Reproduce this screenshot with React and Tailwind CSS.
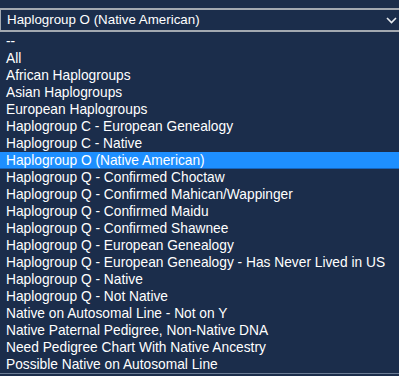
import React from 'react'

const OPTIONS = [
  '--',
  'All',
  'African Haplogroups',
  'Asian Haplogroups',
  'European Haplogroups',
  'Haplogroup C - European Genealogy',
  'Haplogroup C - Native',
  'Haplogroup O (Native American)',
  'Haplogroup Q - Confirmed Choctaw',
  'Haplogroup Q - Confirmed Mahican/Wappinger',
  'Haplogroup Q - Confirmed Maidu',
  'Haplogroup Q - Confirmed Shawnee',
  'Haplogroup Q - European Genealogy',
  'Haplogroup Q - European Genealogy - Has Never Lived in US',
  'Haplogroup Q - Native',
  'Haplogroup Q - Not Native',
  'Native on Autosomal Line - Not on Y',
  'Native Paternal Pedigree, Non-Native DNA',
  'Need Pedigree Chart With Native Ancestry',
  'Possible Native on Autosomal Line',
]

const SELECTED = 'Haplogroup O (Native American)'

export default function App() {
  return (
    <div
      className="w-[399px] h-[376px] overflow-hidden bg-[#1b2d4b] text-white"
      style={{ fontFamily: '"Liberation Sans", Arial, sans-serif' }}
    >
      <div className="pt-[8px]">
        <div className="h-[24px] border-y-2 border-[#a3a9b1] border-l border-l-[#a3a9b1] flex items-center justify-between pl-[6px] pr-[2px] text-[13.33px]">
          <span>{SELECTED}</span>
          <svg width="11" height="7" viewBox="0 0 11 7" fill="none">
            <path d="M1 1l4.5 4.5L10 1" stroke="#e6e9ee" strokeWidth="1.6" />
          </svg>
        </div>
      </div>
      <ul className="mt-[1px] border-b border-[#6b7c95] text-[13.75px] leading-[17px]">
        {OPTIONS.map((opt) => (
          <li
            key={opt}
            className={
              'h-[17px] px-[6px] whitespace-nowrap ' +
              (opt === SELECTED ? 'bg-[#1e8fff] border-b border-[#1565c0]' : '')
            }
          >
            {opt}
          </li>
        ))}
      </ul>
    </div>
  )
}
